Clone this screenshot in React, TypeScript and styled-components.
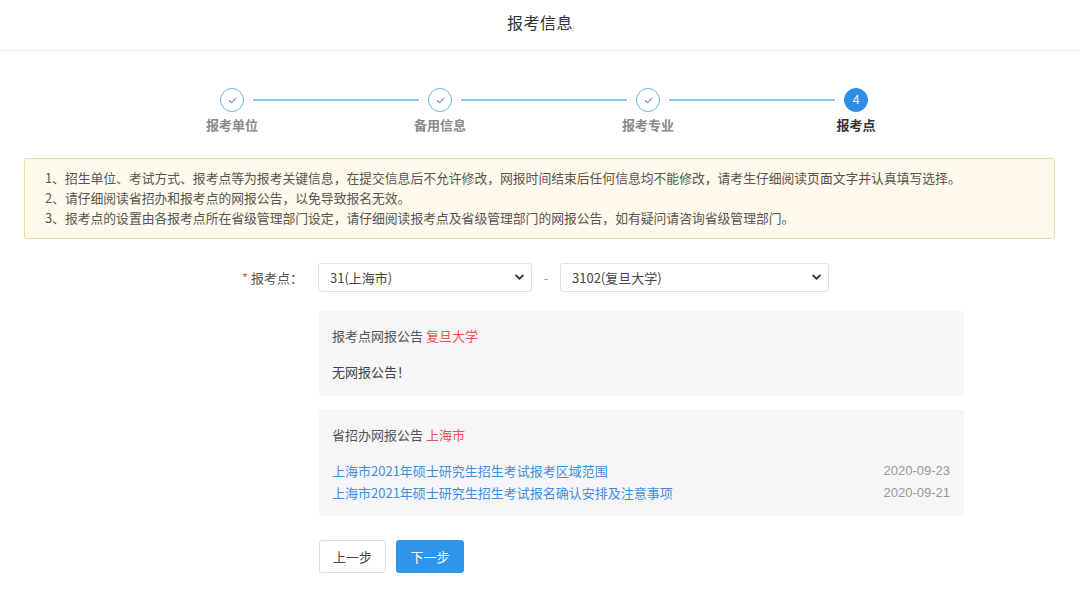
import React from "react";
import styled, { createGlobalStyle } from "styled-components";

const GlobalStyle = createGlobalStyle`
  html, body {
    margin: 0;
    padding: 0;
    background: #ffffff;
  }
  body {
    font-family: "Noto Sans CJK SC", "Noto Sans", "Liberation Sans", sans-serif;
    color: #333;
  }
  * { box-sizing: border-box; }
`;

const Page = styled.div`
  width: 1080px;
  min-height: 610px;
  background: #fff;
`;

const Header = styled.header`
  height: 51px;
  padding-top: 11px;
  border-bottom: 1px solid #ececec;
  text-align: center;
`;

const Title = styled.h1`
  margin: 0;
  font-size: 16px;
  line-height: 22px;
  font-weight: 400;
  color: #333;
  letter-spacing: 0.5px;
`;

const Steps = styled.div`
  width: 832px;
  margin: 37px 0 0 128px;
`;

const StepTrack = styled.div`
  display: flex;
  align-items: center;
  padding: 0 92px;
`;

const Circle = styled.div<{ $active?: boolean }>`
  width: 24px;
  height: 24px;
  flex: 0 0 24px;
  border-radius: 50%;
  display: flex;
  align-items: center;
  justify-content: center;
  border: 1.5px solid ${(p) => (p.$active ? "#2b8de4" : "#72b1e8")};
  background: ${(p) => (p.$active ? "#2b8de4" : "#fff")};
  color: #fff;
  font-size: 12px;
  font-family: "Liberation Sans", Arial, sans-serif;
`;

const Connector = styled.div`
  flex: 1;
  height: 2px;
  margin: 0 9px;
  background: #8ec1ea;
`;

const StepLabels = styled.div`
  display: grid;
  grid-template-columns: repeat(4, 208px);
  margin-top: 4px;
`;

const StepLabel = styled.div<{ $active?: boolean }>`
  text-align: center;
  font-size: 13px;
  line-height: 18px;
  font-weight: 700;
  color: ${(p) => (p.$active ? "#333" : "#8a8a8a")};
`;

const Notice = styled.div`
  margin: 24px 25px 0 24px;
  padding: 9px 20px 10px;
  background: #fffaeb;
  border: 1px solid #f6d99c;
  border-radius: 3px;
`;

const NoticeLine = styled.p`
  margin: 0;
  font-size: 12.8px;
  line-height: 20px;
  color: #555;
  white-space: nowrap;
`;

const FormRow = styled.div`
  display: flex;
  align-items: center;
  margin-top: 24px;
  padding-left: 225px;
`;

const FieldLabel = styled.label`
  width: 80px;
  margin-right: 13px;
  padding-right: 2px;
  text-align: right;
  font-size: 13px;
  color: #555;
`;

const Star = styled.span`
  color: #f0504f;
  margin-right: 3px;
`;

const SelectBox = styled.div<{ $w: number }>`
  position: relative;
  width: ${(p) => p.$w}px;
  height: 29px;
`;

const Select = styled.select`
  appearance: none;
  -webkit-appearance: none;
  width: 100%;
  height: 100%;
  border: 1px solid #e1e1e1;
  border-radius: 3px;
  background: #fff;
  padding: 0 28px 0 11px;
  font-family: "Noto Sans CJK SC", "Liberation Sans", sans-serif;
  font-size: 13px;
  color: #444;
  outline: none;
`;

const Chevron = styled.svg`
  position: absolute;
  right: 8px;
  top: 11px;
  pointer-events: none;
`;

const Dash = styled.span`
  width: 28px;
  text-align: center;
  color: #999;
  font-size: 13px;
`;

const Content = styled.div`
  width: 645px;
  margin: 19px 0 0 319px;
`;

const Panel = styled.section`
  background: #f6f6f8;
  padding: 15px 14px 14px 13px;
  & + & {
    margin-top: 14px;
    padding-bottom: 13px;
  }
`;

const PanelTitle = styled.div`
  font-size: 13px;
  line-height: 20px;
  color: #555;
`;

const Red = styled.span`
  color: #f0504f;
`;

const PanelBody = styled.div`
  margin-top: 16px;
  font-size: 13px;
  line-height: 20px;
  color: #444;
`;

const NewsList = styled.ul`
  list-style: none;
  margin: 14px 0 0;
  padding: 0;
`;

const NewsItem = styled.li`
  display: flex;
  justify-content: space-between;
  align-items: center;
  height: 22px;
  font-size: 13px;
`;

const NewsLink = styled.a`
  color: #3d8fdf;
  text-decoration: none;
`;

const NewsDate = styled.span`
  color: #999;
  font-family: "Liberation Sans", Arial, sans-serif;
  font-size: 13px;
`;

const Buttons = styled.div`
  display: flex;
  gap: 10px;
  margin-top: 24px;
`;

const Button = styled.button<{ $primary?: boolean }>`
  height: 33px;
  width: ${(p) => (p.$primary ? 68 : 67)}px;
  padding: 0;
  border-radius: 3px;
  border: 1px solid ${(p) => (p.$primary ? "#2f95e8" : "#dcdcdc")};
  background: ${(p) => (p.$primary ? "#2f95e8" : "#fff")};
  color: ${(p) => (p.$primary ? "#fff" : "#444")};
  font-family: "Noto Sans CJK SC", sans-serif;
  font-size: 13px;
  cursor: pointer;
`;

const CheckIcon = () => (
  <svg width="11" height="11" viewBox="0 0 10 10" fill="none">
    <path d="M2.2 5.2 L4.2 7 L7.9 3.1" stroke="#5fa6e6" strokeWidth="1.1" strokeLinecap="round" strokeLinejoin="round" />
  </svg>
);

const ChevronIcon = () => (
  <Chevron width="9" height="7" viewBox="0 0 9 7">
    <path d="M1.2 1.5 L4.5 4.8 L7.8 1.5" stroke="#333" strokeWidth="1.8" fill="none" strokeLinecap="round" strokeLinejoin="round" />
  </Chevron>
);

const steps = ["报考单位", "备用信息", "报考专业", "报考点"];

const notices = [
  "1、招生单位、考试方式、报考点等为报考关键信息，在提交信息后不允许修改，网报时间结束后任何信息均不能修改，请考生仔细阅读页面文字并认真填写选择。",
  "2、请仔细阅读省招办和报考点的网报公告，以免导致报名无效。",
  "3、报考点的设置由各报考点所在省级管理部门设定，请仔细阅读报考点及省级管理部门的网报公告，如有疑问请咨询省级管理部门。",
];

const news = [
  { title: "上海市2021年硕士研究生招生考试报考区域范围", date: "2020-09-23" },
  { title: "上海市2021年硕士研究生招生考试报名确认安排及注意事项", date: "2020-09-21" },
];

export default function App() {
  return (
    <Page>
      <GlobalStyle />
      <Header>
        <Title>报考信息</Title>
      </Header>

      <Steps>
        <StepTrack>
          {steps.map((s, i) => (
            <React.Fragment key={s}>
              <Circle $active={i === 3}>{i === 3 ? "4" : <CheckIcon />}</Circle>
              {i < 3 && <Connector />}
            </React.Fragment>
          ))}
        </StepTrack>
        <StepLabels>
          {steps.map((s, i) => (
            <StepLabel key={s} $active={i === 3}>
              {s}
            </StepLabel>
          ))}
        </StepLabels>
      </Steps>

      <Notice>
        {notices.map((n) => (
          <NoticeLine key={n}>{n}</NoticeLine>
        ))}
      </Notice>

      <FormRow>
        <FieldLabel>
          <Star>*</Star>报考点：
        </FieldLabel>
        <SelectBox $w={214}>
          <Select defaultValue="31">
            <option value="31">31(上海市)</option>
          </Select>
          <ChevronIcon />
        </SelectBox>
        <Dash>-</Dash>
        <SelectBox $w={269}>
          <Select defaultValue="3102">
            <option value="3102">3102(复旦大学)</option>
          </Select>
          <ChevronIcon />
        </SelectBox>
      </FormRow>

      <Content>
        <Panel>
          <PanelTitle>
            报考点网报公告 <Red>复旦大学</Red>
          </PanelTitle>
          <PanelBody>无网报公告！</PanelBody>
        </Panel>
        <Panel>
          <PanelTitle>
            省招办网报公告 <Red>上海市</Red>
          </PanelTitle>
          <NewsList>
            {news.map((n) => (
              <NewsItem key={n.title}>
                <NewsLink href="#">{n.title}</NewsLink>
                <NewsDate>{n.date}</NewsDate>
              </NewsItem>
            ))}
          </NewsList>
        </Panel>
        <Buttons>
          <Button>上一步</Button>
          <Button $primary>下一步</Button>
        </Buttons>
      </Content>
    </Page>
  );
}
